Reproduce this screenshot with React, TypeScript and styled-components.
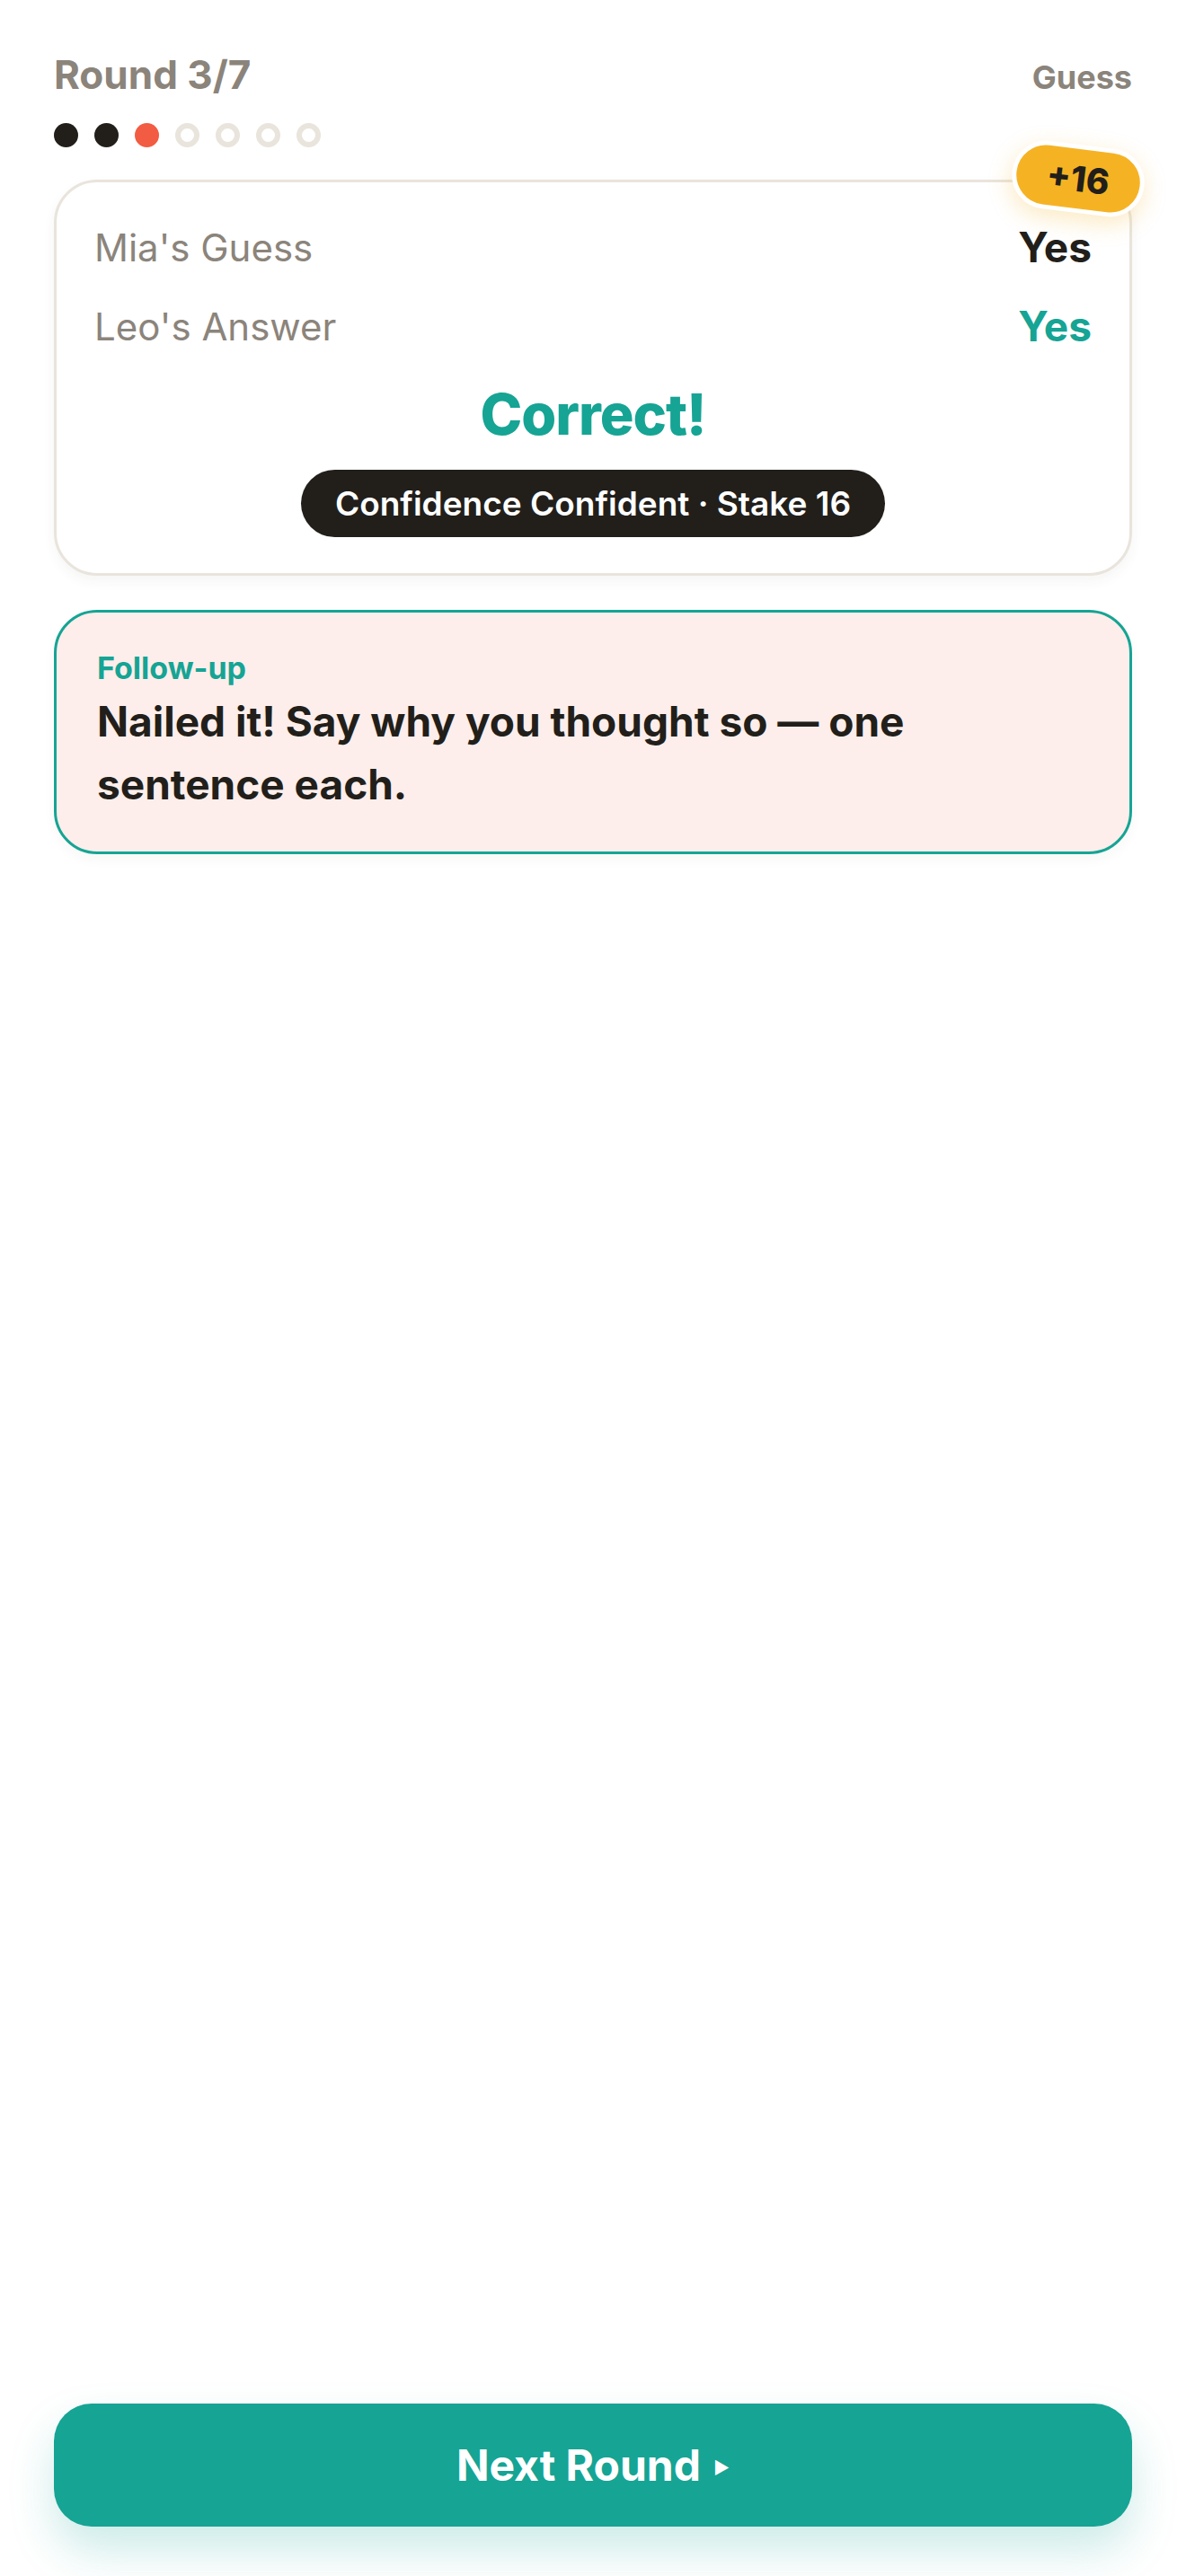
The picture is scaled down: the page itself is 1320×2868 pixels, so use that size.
import styled, { createGlobalStyle } from "styled-components";

const GlobalStyle = createGlobalStyle`
  * { box-sizing: border-box; }
  body {
    margin: 0;
    background: #ffffff;
    font-family: Inter, "Noto Sans", sans-serif;
    color: #221f1b;
  }
`;

const TEAL = "#16a494";
const INK = "#221f1b";
const MUTED = "#8b847b";
const LINE = "#e9e4dc";

const Page = styled.div`
  min-height: 100vh;
  display: flex;
  flex-direction: column;
  padding: 56px 60px 55px;
`;

const Header = styled.div`
  display: flex;
  justify-content: space-between;
  align-items: baseline;
`;

const RoundTitle = styled.div`
  font-size: 44px;
  line-height: 54px;
  font-weight: 700;
  color: ${MUTED};
`;

const Phase = styled.div`
  font-size: 36px;
  line-height: 44px;
  font-weight: 700;
  color: ${MUTED};
`;

const Dots = styled.div`
  display: flex;
  gap: 18px;
  margin-top: 27px;
`;

const Dot = styled.span<{ $state: "done" | "current" | "todo" }>`
  width: 27px;
  height: 27px;
  border-radius: 50%;
  background: ${(p) =>
    p.$state === "done" ? INK : p.$state === "current" ? "#f25c42" : "transparent"};
  border: ${(p) => (p.$state === "todo" ? `6px solid ${LINE}` : "none")};
`;

const ResultCard = styled.div`
  position: relative;
  margin-top: 36px;
  border: 3px solid ${LINE};
  border-radius: 48px;
  padding: 42px 42px 40px;
  background: #fff;
  box-shadow: 0 6px 14px rgba(60, 50, 30, 0.05);
  display: flex;
  flex-direction: column;
  align-items: center;
`;

const Rows = styled.div`
  width: 100%;
  display: flex;
  flex-direction: column;
  gap: 28px;
`;

const Row = styled.div`
  display: flex;
  justify-content: space-between;
  align-items: center;
  height: 60px;
`;

const RowLabel = styled.span`
  font-size: 42px;
  font-weight: 400;
  color: ${MUTED};
`;

const RowValue = styled.span<{ $accent?: boolean }>`
  font-size: 46px;
  font-weight: 700;
  color: ${(p) => (p.$accent ? TEAL : INK)};
`;

const Verdict = styled.div`
  margin-top: 30px;
  font-size: 63px;
  line-height: 76px;
  font-weight: 800;
  letter-spacing: -1px;
  color: ${TEAL};
`;

const StakePill = styled.div`
  margin-top: 24px;
  height: 75px;
  padding: 0 38px;
  border-radius: 999px;
  background: ${INK};
  color: #fff;
  font-size: 37px;
  font-weight: 600;
  display: flex;
  align-items: center;
`;

const PointsBadge = styled.div`
  position: absolute;
  top: -42px;
  right: -17px;
  transform: rotate(7deg);
  background: #f5b324;
  border: 5px solid #fff;
  border-radius: 999px;
  padding: 0 34px;
  line-height: 66px;
  font-size: 39px;
  font-weight: 800;
  color: ${INK};
  box-shadow: 0 8px 26px rgba(245, 179, 36, 0.28);
`;

const FollowUp = styled.div`
  margin-top: 38px;
  border: 3px solid ${TEAL};
  border-radius: 48px;
  background: #fdeeeb;
  padding: 40px 45px 40px;
  box-shadow: 0 6px 14px rgba(60, 50, 30, 0.04);
`;

const FollowUpLabel = styled.div`
  font-size: 34px;
  line-height: 44px;
  font-weight: 700;
  color: ${TEAL};
`;

const FollowUpText = styled.div`
  margin-top: 2px;
  max-width: 980px;
  font-size: 46px;
  line-height: 70px;
  font-weight: 700;
  color: ${INK};
`;

const Spacer = styled.div`
  flex: 1;
`;

const NextButton = styled.button`
  height: 137px;
  border: 0;
  border-radius: 42px;
  background: ${TEAL};
  color: #fff;
  font-family: inherit;
  font-size: 48px;
  font-weight: 700;
  display: flex;
  align-items: center;
  justify-content: center;
  gap: 14px;
  box-shadow: 0 26px 50px rgba(22, 164, 148, 0.22);
  cursor: pointer;
`;

const Arrow = styled.span`
  font-size: 19px;
  margin-top: 6px;
`;

const progress: ("done" | "current" | "todo")[] = [
  "done",
  "done",
  "current",
  "todo",
  "todo",
  "todo",
  "todo",
];

export default function App() {
  return (
    <>
      <GlobalStyle />
      <Page>
        <Header>
          <RoundTitle>Round 3/7</RoundTitle>
          <Phase>Guess</Phase>
        </Header>
        <Dots>
          {progress.map((s, i) => (
            <Dot key={i} $state={s} />
          ))}
        </Dots>

        <ResultCard>
          <PointsBadge>+16</PointsBadge>
          <Rows>
            <Row>
              <RowLabel>Mia's Guess</RowLabel>
              <RowValue>Yes</RowValue>
            </Row>
            <Row>
              <RowLabel>Leo's Answer</RowLabel>
              <RowValue $accent>Yes</RowValue>
            </Row>
          </Rows>
          <Verdict>Correct!</Verdict>
          <StakePill>Confidence Confident · Stake 16</StakePill>
        </ResultCard>

        <FollowUp>
          <FollowUpLabel>Follow-up</FollowUpLabel>
          <FollowUpText>
            Nailed it! Say why you thought so — one sentence each.
          </FollowUpText>
        </FollowUp>

        <Spacer />
        <NextButton>
          Next Round <Arrow>▶</Arrow>
        </NextButton>
      </Page>
    </>
  );
}
